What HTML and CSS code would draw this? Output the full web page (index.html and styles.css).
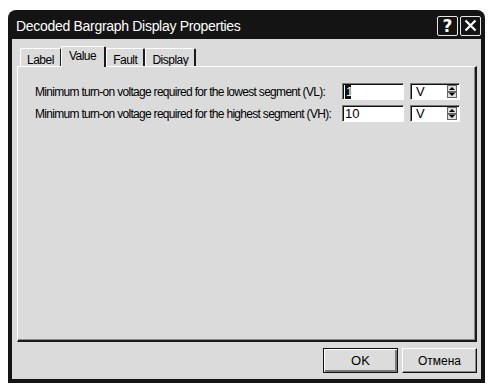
FILE: index.html
```html
<!DOCTYPE html>
<html lang="en">
<head>
    <meta charset="UTF-8">
    <title>Decoded Bargraph Display Properties</title>
    <link rel="stylesheet" href="styles.css">
</head>
<body>
    <div class="dialog">
        <div class="titleBar">
            <span class="titleText">Decoded Bargraph Display Properties</span>
            <div class="titleButtons">
                <span class="capBtn">?</span>
                <span class="capBtn">
                    <svg width="13" height="13" viewBox="0 0 13 13"><path d="M1.5 1.5 L11.5 11.5 M11.5 1.5 L1.5 11.5" stroke="#fff" stroke-width="2.2"/></svg>
                </span>
            </div>
        </div>
        <div class="client">
            <div class="tabs">
                <span class="tab">Label</span>
                <span class="tab active">Value</span>
                <span class="tab">Fault</span>
                <span class="tab">Display</span>
            </div>
            <div class="panel">
                <div class="row">
                    <label class="rowLabel">Minimum turn-on voltage required for the lowest segment (VL):</label>
                    <span class="edit"><span class="sel">1</span></span>
                    <span class="unit">V<span class="spin"><i class="up"></i><i class="down"></i></span></span>
                </div>
                <div class="row">
                    <label class="rowLabel">Minimum turn-on voltage required for the highest segment (VH):</label>
                    <span class="edit">10</span>
                    <span class="unit">V<span class="spin"><i class="up"></i><i class="down"></i></span></span>
                </div>
            </div>
            <div class="footer">
                <button class="btn default">OK</button>
                <button class="btn">Отмена</button>
            </div>
        </div>
    </div>
</body>
</html>
```
FILE: styles.css
```css
* {
    box-sizing: border-box;
}
body {
    margin: 0;
    background: #fff;
    font-family: "Liberation Sans", Arial, sans-serif;
}

.dialog {
    margin: 10px 0 0 8px;
    width: 477px;
    height: 373px;
    background: #141414;
    border-radius: 8px 8px 0 0;
    display: flex;
    flex-direction: column;
}

.titleBar {
    height: 29px;
    display: flex;
    align-items: center;
    padding: 0 4px 0 8px;
}
.titleText {
    flex: 1;
    color: #fff;
    font: 14px "Liberation Sans", Arial, sans-serif;
    letter-spacing: -0.3px;
    padding-top: 3px;
}
.titleButtons {
    display: flex;
    gap: 2px;
    padding-top: 2px;
}
.capBtn {
    width: 21px;
    height: 20px;
    border: 1px solid #e6e6e6;
    border-radius: 2px;
    color: #fff;
    font: bold 17px "DejaVu Sans", sans-serif;
    display: flex;
    align-items: center;
    justify-content: center;
}

.client {
    flex: 1;
    background: #dbdbdb;
    margin: 0 4px 4px 4px;
    padding: 7px 4px 0 5px;
    display: flex;
    flex-direction: column;
    font-size: 12px;
    letter-spacing: -0.5px;
}

.tabs {
    display: flex;
    align-items: flex-end;
    height: 20px;
    padding-left: 3px;
}
.tab {
    height: 18px;
    padding: 4px 6px 0 6px;
    border-top: 1px solid #fff;
    border-left: 1px solid #fff;
    border-right: 2px solid #1a1a1a;
    border-radius: 2px 2px 0 0;
}
.tab.active {
    height: 21px;
    padding: 2px 8px 0 7px;
    margin: 0 0 -1px -1px;
    background: #dbdbdb;
    position: relative;
    z-index: 1;
}

.panel {
    height: 276px;
    border-top: 1px solid #fff;
    border-left: 1px solid #fff;
    border-right: 2px solid #1a1a1a;
    border-bottom: 2px solid #1a1a1a;
    box-shadow: inset -1px -1px #8a8a8a;
    padding: 16px 0 0 17px;
}

.row {
    display: flex;
    align-items: center;
    height: 17px;
    margin-bottom: 5px;
}
.rowLabel {
    width: 307px;
    white-space: nowrap;
    letter-spacing: -0.7px;
    padding-top: 1px;
}
.edit, .unit {
    height: 17px;
    background: #fff;
    border-top: 1px solid #7a7a7a;
    border-left: 1px solid #7a7a7a;
    border-right: 1px solid #fff;
    border-bottom: 1px solid #fff;
    box-shadow: inset 1px 1px #111;
    font-size: 13px;
    letter-spacing: 0;
    line-height: 15px;
}
.edit {
    width: 62px;
    padding-left: 2px;
}
.sel {
    display: inline-block;
    background: #111;
    color: #fff;
    width: 6px;
    height: 14px;
    line-height: 14px;
    margin-top: 1px;
    padding-left: 1px;
}
.unit {
    margin-left: 6px;
    width: 50px;
    padding-left: 5px;
    display: flex;
    justify-content: space-between;
}
.spin {
    display: flex;
    flex-direction: column;
    width: 10px;
    margin: 1px 2px 1px 0;
}
.spin i {
    flex: 1;
    background: #dcdcdc;
    border: 1px solid #666;
    display: flex;
    justify-content: center;
    align-items: center;
}
.spin i::after {
    content: "";
    border-left: 3px solid transparent;
    border-right: 3px solid transparent;
}
.spin .up::after {
    border-bottom: 3px solid #000;
}
.spin .down::after {
    border-top: 3px solid #000;
}

.footer {
    display: flex;
    justify-content: flex-end;
    gap: 4px;
    padding-top: 6px;
}
.btn {
    width: 75px;
    height: 25px;
    background: #dcdcdc;
    border-top: 1px solid #fff;
    border-left: 1px solid #fff;
    border-right: 1px solid #111;
    border-bottom: 1px solid #111;
    box-shadow: inset -1px -1px #888;
    font: 12px "Liberation Sans", Arial, sans-serif;
    color: #000;
    padding: 0;
}
.btn.default {
    border: 1px solid #111;
    box-shadow: inset 1px 1px #fff, inset -2px -2px #7a7a7a;
    font-size: 13px;
}
```
